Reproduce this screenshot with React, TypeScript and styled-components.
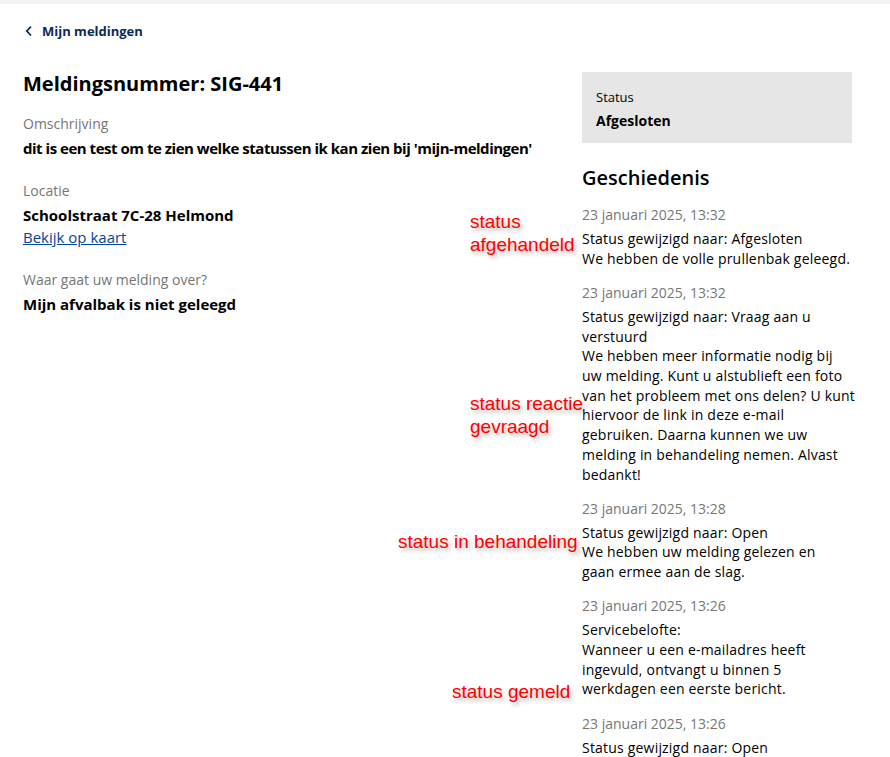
import styled, { createGlobalStyle } from 'styled-components';

interface IHistoryItem {
  date: string;
  lines: string[];
}

interface INote {
  text: string[];
  top: number;
  left: number;
}

// regels zoals ze in de smalle kolom afbreken
const historyItems: IHistoryItem[] = [
  {
    date: '23 januari 2025, 13:32',
    lines: ['Status gewijzigd naar: Afgesloten', 'We hebben de volle prullenbak geleegd.'],
  },
  {
    date: '23 januari 2025, 13:32',
    lines: [
      'Status gewijzigd naar: Vraag aan u',
      'verstuurd',
      'We hebben meer informatie nodig bij',
      'uw melding. Kunt u alstublieft een foto',
      'van het probleem met ons delen? U kunt',
      'hiervoor de link in deze e-mail',
      'gebruiken. Daarna kunnen we uw',
      'melding in behandeling nemen. Alvast',
      'bedankt!',
    ],
  },
  {
    date: '23 januari 2025, 13:28',
    lines: ['Status gewijzigd naar: Open', 'We hebben uw melding gelezen en', 'gaan ermee aan de slag.'],
  },
  {
    date: '23 januari 2025, 13:26',
    lines: [
      'Servicebelofte:',
      'Wanneer u een e-mailadres heeft',
      'ingevuld, ontvangt u binnen 5',
      'werkdagen een eerste bericht.',
    ],
  },
  {
    date: '23 januari 2025, 13:26',
    lines: ['Status gewijzigd naar: Open'],
  },
];

// rode aantekeningen over de screenshot heen
const notes: INote[] = [
  { text: ['status', 'afgehandeld'], top: 210, left: 470 },
  { text: ['status reactie', 'gevraagd'], top: 392, left: 470 },
  { text: ['status in behandeling'], top: 530, left: 398 },
  { text: ['status gemeld'], top: 680, left: 452 },
];

const App = () => {
  return (
    <Page>
      <GlobalStyle />
      <TopStrip />

      <BackLink href="#">
        <svg width="8" height="12" viewBox="0 0 8 12" fill="none">
          <path d="M6 1.5L1.8 6L6 10.5" stroke="#0b2a5b" strokeWidth="1.8" />
        </svg>
        Mijn meldingen
      </BackLink>

      <Layout>
        <Main>
          <Title>Meldingsnummer: SIG-441</Title>

          <Field>
            <Label>Omschrijving</Label>
            <Value tight>dit is een test om te zien welke statussen ik kan zien bij 'mijn-meldingen'</Value>
          </Field>

          <Field>
            <Label>Locatie</Label>
            <Value>Schoolstraat 7C-28 Helmond</Value>
            <MapLink href="#">Bekijk op kaart</MapLink>
          </Field>

          <Field>
            <Label>Waar gaat uw melding over?</Label>
            <Value>Mijn afvalbak is niet geleegd</Value>
          </Field>
        </Main>

        <Aside>
          <StatusBox>
            <StatusLabel>Status</StatusLabel>
            <StatusValue>Afgesloten</StatusValue>
          </StatusBox>

          <HistoryTitle>Geschiedenis</HistoryTitle>

          <HistoryList>
            {historyItems.map((item, index) => (
              <HistoryEntry key={index}>
                <HistoryDate>{item.date}</HistoryDate>
                {item.lines.map((line, i) => (
                  <HistoryText key={i}>{line}</HistoryText>
                ))}
              </HistoryEntry>
            ))}
          </HistoryList>
        </Aside>
      </Layout>

      {notes.map((note) => (
        <Note key={note.text.join(' ')} top={note.top} left={note.left}>
          {note.text.map((t) => (
            <span key={t}>{t}</span>
          ))}
        </Note>
      ))}
    </Page>
  );
};

export default App;

const GlobalStyle = createGlobalStyle`
  * {
    box-sizing: border-box;
  }

  body {
    margin: 0;
    background: #ffffff;
    font-family: 'Open Sans', 'Noto Sans', sans-serif;
    color: #000000;
  }
`;

const Page = styled.div`
  position: relative;
  width: 890px;
  height: 757px;
  overflow: hidden;
  background: #ffffff;
`;

const TopStrip = styled.div`
  height: 4px;
  background: #f3f3f3;
`;

const BackLink = styled.a`
  display: flex;
  align-items: center;
  gap: 9px;
  margin: 18px 0 0 25px;
  width: fit-content;
  font-size: 13px;
  font-weight: 700;
  line-height: 18px;
  color: #0b2a5b;
  text-decoration: none;
`;

const Layout = styled.div`
  display: grid;
  grid-template-columns: 1fr 270px;
  column-gap: 17px;
  padding: 0 38px 0 23px;
  margin-top: 22px;
`;

const Main = styled.div`
  display: flex;
  flex-direction: column;
  padding-top: 10px;
`;

const Title = styled.h1`
  margin: 0 0 18px;
  font-size: 20px;
  font-weight: 700;
  line-height: 24px;
`;

const Field = styled.div`
  display: flex;
  flex-direction: column;

  & + & {
    margin-top: 22px;
  }
`;

const Label = styled.div`
  font-size: 14px;
  line-height: 20px;
  color: #767676;
  margin-bottom: 3px;
`;

const Value = styled.div<{ tight?: boolean }>`
  font-size: 15px;
  font-weight: 700;
  line-height: 22px;
  letter-spacing: ${({ tight }) => (tight ? '-0.48px' : '0')};
  white-space: ${({ tight }) => (tight ? 'nowrap' : 'normal')};
`;

const MapLink = styled.a`
  font-size: 15px;
  line-height: 22px;
  color: #004699;
  text-decoration: underline;
  width: fit-content;
`;

const Aside = styled.aside`
  display: flex;
  flex-direction: column;
  padding-top: 10px;
`;

const StatusBox = styled.div`
  background: #e6e6e6;
  padding: 15px 14px 12px;
  height: 71px;
`;

const StatusLabel = styled.div`
  font-size: 13px;
  line-height: 20px;
  margin-bottom: 4px;
`;

const StatusValue = styled.div`
  font-size: 14px;
  font-weight: 700;
  line-height: 20px;
`;

const HistoryTitle = styled.h2`
  margin: 22px 0 14px;
  font-size: 20px;
  font-weight: 600;
  line-height: 26px;
`;

const HistoryList = styled.div`
  display: flex;
  flex-direction: column;
  gap: 14.5px;
`;

const HistoryEntry = styled.div`
  display: flex;
  flex-direction: column;
`;

const HistoryDate = styled.div`
  font-size: 14px;
  line-height: 20px;
  color: #777777;
  margin-bottom: 4px;
`;

const HistoryText = styled.div`
  font-size: 14px;
  line-height: 19.7px;
  letter-spacing: 0.2px;
  white-space: nowrap;
`;

const Note = styled.div<{ top: number; left: number }>`
  position: absolute;
  top: ${({ top }) => top}px;
  left: ${({ left }) => left}px;
  display: flex;
  flex-direction: column;
  font-family: 'Liberation Sans', Arial, sans-serif;
  font-size: 19px;
  line-height: 23px;
  color: #ff0000;
  text-shadow: 2px 3px 4px rgba(0, 0, 0, 0.3);
  white-space: nowrap;
`;
